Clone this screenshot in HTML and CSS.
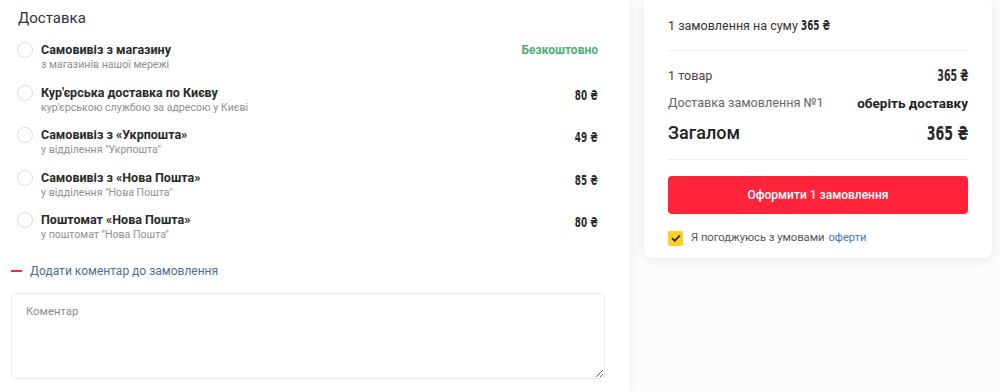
FILE: index.html
```html
<!DOCTYPE html>
<html lang="uk">
<head>
    <meta charset="UTF-8">
    <meta name="viewport" content="width=device-width, initial-scale=1.0">
    <title>Оформлення замовлення</title>
    <link rel="stylesheet" href="styles.css">
</head>
<body>
    <div class="page">
        <div class="main">
            <h2 class="title">Доставка</h2>
            <ul class="delivery">
                <li>
                    <span class="radio"></span>
                    <div class="info">
                        <div class="name">Самовивіз з магазину</div>
                        <div class="desc">з магазинів нашої мережі</div>
                    </div>
                    <span class="free">Безкоштовно</span>
                </li>
                <li>
                    <span class="radio"></span>
                    <div class="info">
                        <div class="name">Кур'єрська доставка по Києву</div>
                        <div class="desc">кур'єрською службою за адресою у Києві</div>
                    </div>
                    <span class="price"><span class="num">80 ₴</span></span>
                </li>
                <li>
                    <span class="radio"></span>
                    <div class="info">
                        <div class="name">Самовивіз з «Укрпошта»</div>
                        <div class="desc">у відділення "Укрпошта"</div>
                    </div>
                    <span class="price"><span class="num">49 ₴</span></span>
                </li>
                <li>
                    <span class="radio"></span>
                    <div class="info">
                        <div class="name">Самовивіз з «Нова Пошта»</div>
                        <div class="desc">у відділення "Нова Пошта"</div>
                    </div>
                    <span class="price"><span class="num">85 ₴</span></span>
                </li>
                <li>
                    <span class="radio"></span>
                    <div class="info">
                        <div class="name">Поштомат «Нова Пошта»</div>
                        <div class="desc">у поштомат "Нова Пошта"</div>
                    </div>
                    <span class="price"><span class="num">80 ₴</span></span>
                </li>
            </ul>
            <div class="comment_toggle"><span class="dash"></span>Додати коментар до замовлення</div>
            <textarea class="comment" placeholder="Коментар"></textarea>
        </div>
        <div class="side">
            <div class="card">
                <div class="card_head">1 замовлення на суму <span class="num left">365 ₴</span></div>
                <div class="line">
                    <span>1 товар</span><span class="num">365 ₴</span>
                </div>
                <div class="line gray">
                    <span>Доставка замовлення №1</span><b>оберіть доставку</b>
                </div>
                <div class="line total">
                    <span>Загалом</span><span class="num">365 ₴</span>
                </div>
                <button class="btn_order">Оформити 1 замовлення</button>
                <label class="agree">
                    <span class="check">
                        <svg width="10" height="8" viewBox="0 0 10 8"><path d="M1 4.2 3.7 6.8 9 1.3" fill="none" stroke="#2b2b2b" stroke-width="1.8"/></svg>
                    </span>
                    Я погоджуюсь з умовами <a href="#">оферти</a>
                </label>
            </div>
        </div>
    </div>
</body>
</html>
```

FILE: styles.css
```css
*{
    margin:0;
    padding:0;
    box-sizing: border-box;
}
body{
    font-family: Roboto, "Noto Sans", sans-serif;
    color: #222;
    background: #fcfcfc;
    overflow: hidden;
}
.page{
    display: flex;
    height: 391px;
}
.main{
    width: 629px;
    background: white;
    padding: 8px 31px 0 11px;
    box-shadow: 3px 0 10px rgba(0,0,0,0.05);
    position: relative;
    z-index: 1;
}
.title{
    font-size: 15px;
    font-weight: 400;
    line-height: 20px;
    color: #333;
    padding-left: 7px;
    margin-bottom: 14px;
}
.delivery{
    list-style-type: none;
    padding-left: 6px;
}
.delivery li{
    display: flex;
    align-items: flex-start;
    height: 30px;
    margin-bottom: 12.5px;
}
.radio{
    width: 16px;
    height: 16px;
    border: 1px solid #dcdcdc;
    border-radius: 50%;
    margin-right: 8px;
    flex-shrink: 0;
}
.info{
    flex: 1;
}
.name{
    font-size: 12.5px;
    font-weight: 700;
    line-height: 16px;
    color: #2a2a2a;
}
.desc{
    font-size: 10.6px;
    line-height: 14px;
    color: #8f8f8f;
}
.free{
    font-size: 12px;
    font-weight: 700;
    line-height: 16px;
    color: #4caf78;
}
.num{
    display: inline-block;
    font-family: "DejaVu Sans", sans-serif;
    font-stretch: condensed;
    font-weight: 700;
    color: #2a2a2a;
    transform: scaleX(0.7);
    transform-origin: right center;
}
.num.left{
    transform-origin: left center;
}
.price{
    font-size: 14px;
    line-height: 16px;
    padding-top: 2px;
}
.comment_toggle{
    display: flex;
    align-items: center;
    font-size: 12px;
    color: #4a6f96;
    line-height: 18px;
    margin-top: 20px;
}
.dash{
    width: 11px;
    height: 2px;
    background: #ff2439;
    margin-right: 8px;
}
.comment{
    display: block;
    width: 594px;
    height: 86px;
    margin-top: 13px;
    border: 1px solid #ececec;
    border-radius: 4px;
    padding: 11px 14px;
    font-family: Roboto, "Noto Sans", sans-serif;
    font-size: 11.3px;
    outline: none;
}
.comment::placeholder{
    color: #8a8a8a;
}
.side{
    flex: 1;
    padding-left: 15px;
}
.card{
    width: 348px;
    margin-top: -4px;
    background: white;
    border-radius: 8px;
    box-shadow: 0 2px 12px rgba(0,0,0,0.08);
    padding: 20px 24px 12px;
}
.card_head{
    font-size: 12.5px;
    line-height: 18px;
    color: #333;
    padding-bottom: 15px;
    border-bottom: 1px solid #eeeeee;
    margin-bottom: 16px;
}
.card_head .num{
    font-size: 14px;
}
.line{
    display: flex;
    justify-content: space-between;
    align-items: center;
    font-size: 12.6px;
    line-height: 18px;
    color: #444;
    margin-bottom: 9px;
    height: 18px;
}
.line .num{
    font-size: 15px;
}
.line.gray span{
    color: #666;
}
.line b{
    font-size: 13.5px;
    font-weight: 700;
    color: #222;
}
.total{
    font-size: 18px;
    font-weight: 500;
    line-height: 24px;
    height: auto;
    color: #222;
    padding-bottom: 14px;
    border-bottom: 1px solid #eeeeee;
    margin-bottom: 16px;
    margin-top: 1px;
}
.total .num{
    font-size: 20px;
}
.btn_order{
    width: 100%;
    height: 38px;
    border: none;
    border-radius: 4px;
    background-color: #ff2439;
    color: white;
    font-family: Roboto, "Noto Sans", sans-serif;
    font-size: 12px;
    font-weight: 500;
}
.agree{
    display: flex;
    align-items: center;
    font-size: 11.2px;
    color: #555;
    margin-top: 16px;
    line-height: 16px;
}
.check{
    width: 15px;
    height: 15px;
    background: #ffcf2a;
    border-radius: 2px;
    display: flex;
    align-items: center;
    justify-content: center;
    margin-right: 8px;
}
.agree a{
    color: #3d7ac2;
    text-decoration: none;
    margin-left: 4px;
}
```
